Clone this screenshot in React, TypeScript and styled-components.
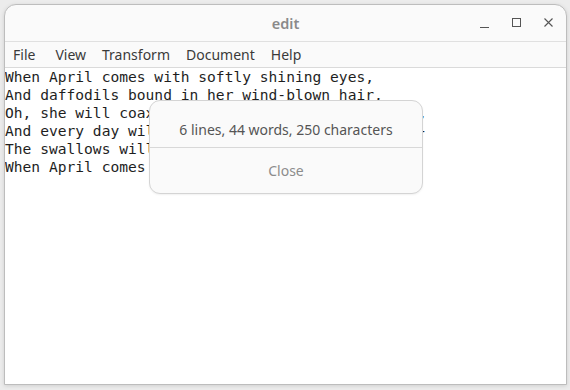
import React from "react";
import styled, { createGlobalStyle } from "styled-components";

const Global = createGlobalStyle`
  html, body { margin: 0; padding: 0; background: #ececec; }
  body { width: 570px; height: 390px; overflow: hidden; }
`;

const Page = styled.div`
  padding: 4px 3px 5px 4px;
  box-sizing: border-box;
  width: 570px;
  height: 390px;
`;

const Window = styled.div`
  position: relative;
  display: flex;
  flex-direction: column;
  height: 100%;
  background: #fafafa;
  border: 1px solid #bdbdbd;
  border-radius: 12px 12px 0 0;
  box-sizing: border-box;
  overflow: hidden;
  box-shadow: 0 1px 4px rgba(0,0,0,0.12);
`;

const TitleBar = styled.div`
  height: 36px;
  flex: none;
  position: relative;
  display: flex;
  align-items: center;
  justify-content: center;
  border-bottom: 1px solid #e0e0e0;
  font-family: "Noto Sans", "Open Sans", sans-serif;
  font-size: 14.5px;
  font-weight: 600;
  color: #8a8a8a;
`;

const Controls = styled.div`
  position: absolute;
  right: 5px;
  top: 0;
  bottom: 0;
  display: flex;
  align-items: center;
  gap: 7px;
`;

const CtrlBtn = styled.div`
  width: 25px;
  height: 25px;
  display: flex;
  align-items: center;
  justify-content: center;
  color: #555;
`;

const MenuBar = styled.div`
  height: 25px;
  flex: none;
  display: flex;
  align-items: center;
  padding-left: 3px;
  font-family: "Noto Sans", "Open Sans", sans-serif;
  font-size: 14px;
  color: #3a3a3a;
`;

const MenuItem = styled.span<{ $first?: boolean }>`
  padding: 0 5px;
  margin-right: ${(p) => (p.$first ? 10 : 6)}px;
`;

const TextArea = styled.div`
  position: relative;
  flex: 1;
  background: #ffffff;
  border-top: 1px solid #dadada;
  font-family: "DejaVu Sans Mono", "Liberation Mono", monospace;
  font-size: 14.6px;
  line-height: 18px;
  color: #1e1e1e;
  white-space: pre;
`;

const Line = styled.div`
  height: 18px;
`;

const Popover = styled.div`
  position: absolute;
  left: 144px;
  top: 32px;
  width: 274px;
  height: 94px;
  box-sizing: border-box;
  background: #fafafa;
  border: 1px solid #d4d4d4;
  border-radius: 11px;
  display: flex;
  flex-direction: column;
  font-family: "Noto Sans", "Open Sans", sans-serif;
  font-size: 14px;
  white-space: nowrap;
  box-shadow: 0 1px 2px rgba(0,0,0,0.06);
`;

const Info = styled.div`
  height: 47px;
  display: flex;
  align-items: center;
  justify-content: center;
  padding-top: 12px;
  box-sizing: border-box;
  color: #555555;
  border-bottom: 1px solid #d8d8d8;
`;

const CloseBtn = styled.div`
  flex: 1;
  display: flex;
  align-items: center;
  justify-content: center;
  color: #8c8c8c;
`;

const lines = [
  "When April comes with softly shining eyes,",
  "And daffodils bound in her wind-blown hair,",
  "Oh, she will coax the lagging sun to rise again,",
  "And every day will dawn so bright and warm and -",
  "The swallows will return to nest",
  "When April comes again",
];

const menus = ["File", "View", "Transform", "Document", "Help"];

export default function App() {
  return (
    <>
      <Global />
      <Page>
        <Window>
          <TitleBar>
            edit
            <Controls>
              <CtrlBtn>
                <svg width="12" height="12" viewBox="0 0 12 12">
                  <path d="M1 10.5h9" stroke="#555" strokeWidth="1" fill="none" />
                </svg>
              </CtrlBtn>
              <CtrlBtn>
                <svg width="12" height="12" viewBox="0 0 12 12">
                  <rect x="1.5" y="1.5" width="8" height="8" stroke="#555" strokeWidth="1" fill="none" />
                </svg>
              </CtrlBtn>
              <CtrlBtn>
                <svg width="12" height="12" viewBox="0 0 12 12">
                  <path d="M1.5 1.5l8 8M9.5 1.5l-8 8" stroke="#555" strokeWidth="1.1" fill="none" />
                </svg>
              </CtrlBtn>
            </Controls>
          </TitleBar>
          <MenuBar>
            {menus.map((m, i) => (
              <MenuItem key={m} $first={i === 0}>
                {m}
              </MenuItem>
            ))}
          </MenuBar>
          <TextArea>
            {lines.map((l, i) => (
              <Line key={i}>{l}</Line>
            ))}
            <Popover>
              <Info>6 lines, 44 words, 250 characters</Info>
              <CloseBtn>Close</CloseBtn>
            </Popover>
          </TextArea>
        </Window>
      </Page>
    </>
  );
}
